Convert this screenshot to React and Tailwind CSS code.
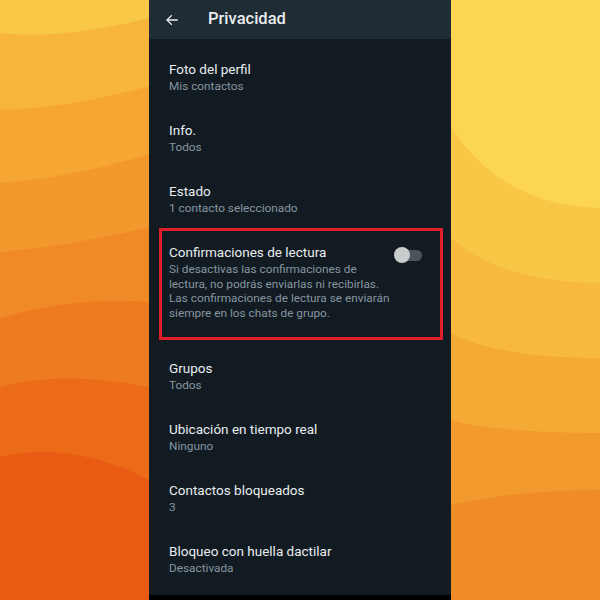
import React from "react";

const items = [
  { title: "Foto del perfil", sub: "Mis contactos" },
  { title: "Info.", sub: "Todos" },
  { title: "Estado", sub: "1 contacto seleccionado" },
];

const items2 = [
  { title: "Grupos", sub: "Todos" },
  { title: "Ubicación en tiempo real", sub: "Ninguno" },
  { title: "Contactos bloqueados", sub: "3" },
  { title: "Bloqueo con huella dactilar", sub: "Desactivada" },
];

function Waves() {
  return (
    <svg className="absolute inset-0" width="600" height="600" viewBox="0 0 600 600">
      <rect x="0" y="0" width="150" height="600" fill="#f9c846" />
      <path d="M0,33 Q60,40 150,18 L150,600 L0,600 Z" fill="#f7b63b" />
      <path d="M0,110 Q70,108 150,86 L150,600 L0,600 Z" fill="#f5a633" />
      <path d="M0,183 Q70,178 150,154 L150,600 L0,600 Z" fill="#f3982d" />
      <path d="M0,252 Q70,246 150,227 L150,600 L0,600 Z" fill="#f08a27" />
      <path d="M0,318 Q75,296 150,302 L150,600 L0,600 Z" fill="#ee7b20" />
      <path d="M0,387 Q60,370 150,387 L150,600 L0,600 Z" fill="#eb6b19" />
      <path d="M0,457 Q70,440 150,480 L150,600 L0,600 Z" fill="#e95b12" />

      <rect x="450" y="0" width="150" height="600" fill="#fcd652" />
      <path d="M450,125 Q500,205 600,208 L600,600 L450,600 Z" fill="#f9c746" />
      <path d="M450,237 Q500,282 600,283 L600,600 L450,600 Z" fill="#f7b93e" />
      <path d="M450,333 Q500,358 600,358 L600,600 L450,600 Z" fill="#f5aa35" />
      <path d="M450,420 Q500,433 600,433 L600,600 L450,600 Z" fill="#f39a2e" />
      <path d="M450,505 Q520,490 600,490 L600,600 L450,600 Z" fill="#f08c27" />
    </svg>
  );
}

function Row({ title, sub }) {
  return (
    <div className="h-[61px] pt-[22px] px-[20px]">
      <div className="text-[13.5px] leading-[17px] text-[#e9edef]">{title}</div>
      <div className="text-[11.8px] leading-[17px] text-[#8696a0]">{sub}</div>
    </div>
  );
}

export default function App() {
  return (
    <div
      className="relative w-[600px] h-[600px] overflow-hidden"
      style={{ fontFamily: "Roboto, 'Liberation Sans', sans-serif" }}
    >
      <Waves />
      <div className="relative mx-auto w-[302px] h-full bg-[#121b22] flex flex-col">
        <div className="h-[39px] bg-[#1f2c34] flex items-center shrink-0">
          <svg className="ml-[16px]" width="14" height="14" viewBox="0 0 24 24" fill="none" stroke="#e9edef" strokeWidth="2.4" strokeLinecap="round" strokeLinejoin="round">
            <path d="M21 12H4" />
            <path d="M11 4.5L3.5 12L11 19.5" />
          </svg>
          <span className="ml-[29px] text-[16.5px] font-medium text-[#e9edef]">Privacidad</span>
        </div>

        {items.map((it) => (
          <Row key={it.title} {...it} />
        ))}

        <div className="relative h-[116px] pt-[22px] pl-[20px] pr-[29px] flex">
          <div className="flex-1">
            <div className="text-[13.5px] leading-[17px] text-[#e9edef]">Confirmaciones de lectura</div>
            <div className="mt-[1px] w-[224px] text-[11.8px] leading-[14.5px] text-[#8696a0]">
              Si desactivas las confirmaciones de lectura, no podrás enviarlas ni recibirlas. Las confirmaciones de lectura se enviarán siempre en los chats de grupo.
            </div>
          </div>
          <div className="relative w-[27px] h-[16px] mt-[3px] flex items-center">
            <div className="w-full h-[11px] rounded-full bg-[#4a545b]" />
            <div className="absolute left-[-1px] top-0 w-[16px] h-[16px] rounded-full bg-[#c9cccd]" />
          </div>
          <div className="absolute left-[10px] right-[8px] top-[6px] bottom-[-2px] border-[3px] border-[#e01f2a]" />
        </div>

        {items2.map((it) => (
          <Row key={it.title} {...it} />
        ))}

        <div className="flex-1" />
        <div className="h-[5px] bg-black shrink-0" />
      </div>
    </div>
  );
}
